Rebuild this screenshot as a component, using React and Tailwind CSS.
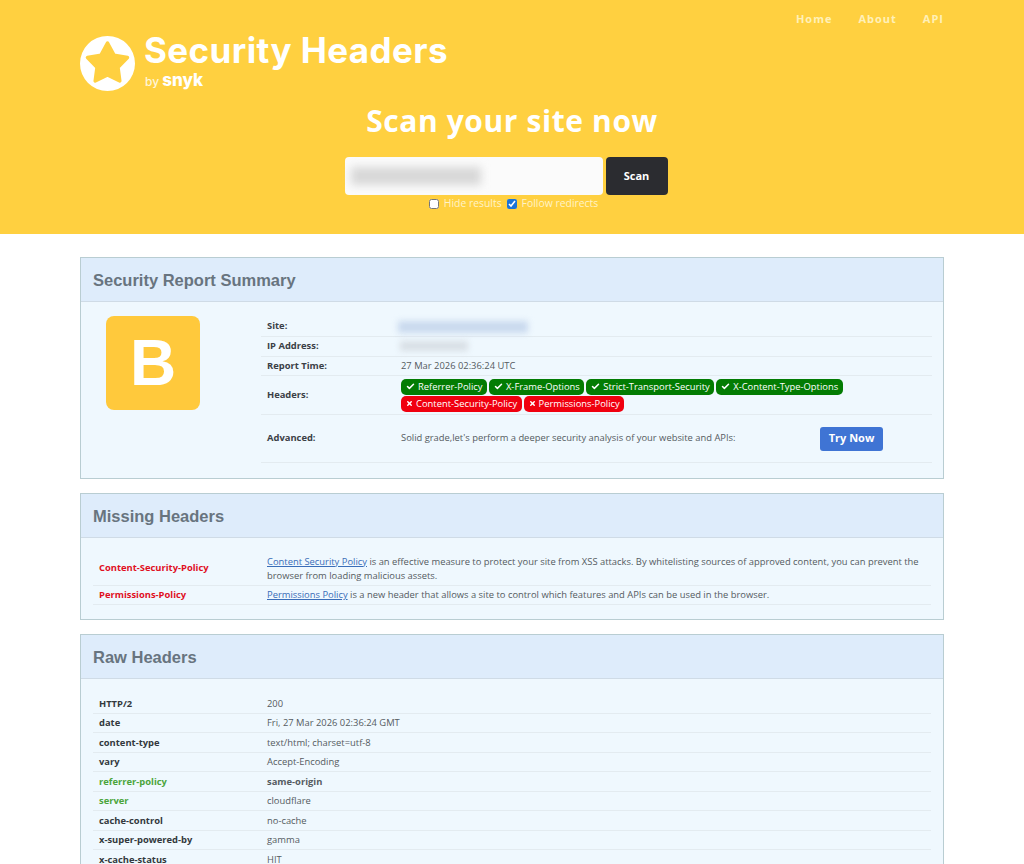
import { Check, X } from "lucide-react";

const GOOD = ["Referrer-Policy", "X-Frame-Options", "Strict-Transport-Security", "X-Content-Type-Options"];
const BAD = ["Content-Security-Policy", "Permissions-Policy"];

const RAW = [
  { name: "HTTP/2", value: "200" },
  { name: "date", value: "Fri, 27 Mar 2026 02:36:24 GMT" },
  { name: "content-type", value: "text/html; charset=utf-8" },
  { name: "vary", value: "Accept-Encoding" },
  { name: "referrer-policy", value: "same-origin", good: true, strong: true },
  { name: "server", value: "cloudflare", good: true },
  { name: "cache-control", value: "no-cache" },
  { name: "x-super-powered-by", value: "gamma" },
  { name: "x-cache-status", value: "HIT" },
];

function Pill({ good, children }) {
  return (
    <span className={`inline-flex items-center gap-[3px] h-[16px] pl-[5px] pr-[4.5px] rounded-[5px] text-[9.4px] leading-none whitespace-nowrap text-white ${good ? "bg-[#037c03]" : "bg-[#f0000f]"}`}>
      {good ? <Check size={9} strokeWidth={4} /> : <X size={7} strokeWidth={5} />}
      {children}
    </span>
  );
}

function Card({ title, children }) {
  return (
    <section className="border border-[#b9cdd2] bg-[#eff8fe]">
      <h2 className="h-[44px] px-[12px] pt-[1px] flex items-center bg-[#deecfb] border-b border-[#cfdbe6] font-['Liberation_Sans',sans-serif] font-bold text-[16.5px] text-[#68747f]">
        {title}
      </h2>
      {children}
    </section>
  );
}

function SummaryRow({ label, className, children }) {
  return (
    <div className={`flex items-center border-b border-[#e3ebf0] ${className}`}>
      <div className="w-[140px] pl-[6px] shrink-0 font-bold text-[#3b4046]">{label}</div>
      <div className="flex-1 min-w-0">{children}</div>
    </div>
  );
}

function Row({ label, labelClass = "text-[#33383d]", className = "h-[19.5px]", children }) {
  return (
    <div className={`flex items-center border-b border-[#e3ebf0] ${className}`}>
      <div className={`w-[174px] pl-[6px] pt-[1px] shrink-0 font-bold ${labelClass}`}>{label}</div>
      <div className="flex-1 min-w-0 pt-[1px]">{children}</div>
    </div>
  );
}

export default function App() {
  return (
    <div className="h-[864px] overflow-hidden bg-white font-['Open_Sans',sans-serif] text-[9.4px] text-[#555b61]">
      {/* Header */}
      <header className="h-[234px] bg-[#ffd040] text-white">
        <div className="relative w-[864px] mx-auto h-full flex flex-col">
          <nav className="absolute right-0 top-[11px] flex gap-[26px] text-[11px] font-bold tracking-[1px] text-[#fff0b8]">
            <span>Home</span>
            <span>About</span>
            <span>API</span>
          </nav>
          <div className="flex items-start gap-[9px] mt-[36px] h-[55px]">
            <svg width="55" height="55" viewBox="0 0 55 55">
              <circle cx="27.5" cy="27.5" r="27.5" fill="#fff" />
              <path
                d="M27.5 7 L34 19.1 L47.5 21.5 L38 31.4 L39.8 45 L27.5 39 L15.2 45 L17 31.4 L7.5 21.5 L21 19.1 Z"
                fill="#ffd040"
                stroke="#ffd040"
                strokeWidth="3.5"
                strokeLinejoin="round"
              />
            </svg>
            <div className="flex flex-col mt-[-5px]">
              <div className="font-['Inter',sans-serif] font-bold text-[35px] leading-[38px] tracking-[0.4px] whitespace-nowrap">Security Headers</div>
              <div className="font-['Inter',sans-serif] font-medium text-[12px] leading-[14px] mt-[4px] pl-[1px] text-[#fff6d9]">
                by <span className="font-extrabold text-[17px] text-white">snyk</span>
              </div>
            </div>
          </div>
          <h1 className="mt-[12px] text-center font-bold text-[30px] leading-[36px] tracking-[0.6px]">Scan your site now</h1>
          <div className="flex justify-center gap-[3px] mt-[18px] pr-[12px]">
            <div className="w-[258px] h-[38px] rounded-[4px] bg-[#fbfbfb] flex items-center px-[6px]">
              <div className="w-[130px] h-[18px] bg-[#d8d8d8] blur-[4px]" />
            </div>
            <button className="w-[62px] h-[38px] rounded-[4px] bg-[#2b2c30] text-white text-[11px] font-bold">Scan</button>
          </div>
          <div className="flex justify-center items-center mt-[1px] pl-[3px] text-[10.4px] text-[#fff3c7] gap-[5px]">
            <input type="checkbox" readOnly className="w-[10px] h-[10px]" />
            <span>Hide results</span>
            <input type="checkbox" readOnly checked className="w-[10px] h-[10px] accent-[#1a73d8]" />
            <span>Follow redirects</span>
          </div>
        </div>
      </header>

      <main className="w-[864px] mx-auto mt-[23px] flex flex-col gap-[14px]">
        {/* Summary */}
        <Card title="Security Report Summary">
          <div className="flex h-[176px]">
            <div className="w-[180px] shrink-0 pt-[14px] pl-[25px]">
              <div className="w-[94px] h-[94px] rounded-[8px] bg-[#ffc93c] flex items-center justify-center font-['Liberation_Sans',sans-serif] font-bold text-[64px] text-white">
                B
              </div>
            </div>
            <div className="flex-1 pr-[11px] pt-[15px]">
              <SummaryRow label="Site:" className="h-[20px]">
                <div className="w-[130px] h-[12px] ml-[-3px] bg-[#c9d9ee] blur-[3px]" />
              </SummaryRow>
              <SummaryRow label="IP Address:" className="h-[19.5px]">
                <div className="w-[68px] h-[10px] ml-[-1px] bg-[#d8dfe5] blur-[3px]" />
              </SummaryRow>
              <SummaryRow label="Report Time:" className="h-[19.5px]">27 Mar 2026 02:36:24 UTC</SummaryRow>
              <SummaryRow label="Headers:" className="h-[39px]">
                <div className="flex flex-wrap gap-x-[2px] gap-y-[1px]">
                  {GOOD.map((h) => <Pill key={h} good>{h}</Pill>)}
                  {BAD.map((h) => <Pill key={h}>{h}</Pill>)}
                </div>
              </SummaryRow>
              <SummaryRow label="Advanced:" className="h-[48px]">
                <div className="flex items-center">
                  <span className="w-[419px]">Solid grade,let's perform a deeper security analysis of your website and APIs:</span>
                  <button className="w-[63px] h-[24px] rounded-[3px] bg-[#3f74d4] text-white text-[11px] font-bold">Try Now</button>
                </div>
              </SummaryRow>
            </div>
          </div>
        </Card>

        {/* Missing */}
        <Card title="Missing Headers">
          <div className="px-[12px] pt-[13px] pb-[14px]">
            <Row label="Content-Security-Policy" labelClass="text-[#e0101e]" className="h-[35px]">
              <p className="leading-[14px]">
                <a className="text-[#3a6db8] underline">Content Security Policy</a> is an effective measure to protect your site from XSS attacks. By whitelisting sources of approved content, you can prevent the browser from loading malicious assets.
              </p>
            </Row>
            <Row label="Permissions-Policy" labelClass="text-[#e0101e]" className="h-[19px]">
              <a className="text-[#3a6db8] underline">Permissions Policy</a> is a new header that allows a site to control which features and APIs can be used in the browser.
            </Row>
          </div>
        </Card>

        {/* Raw */}
        <Card title="Raw Headers">
          <div className="px-[12px] pt-[15px]">
            {RAW.map((r) => (
              <Row key={r.name} label={r.name} labelClass={r.good ? "text-[#4ba53c]" : "text-[#33383d]"}>
                <span className={r.strong ? "font-bold" : ""}>{r.value}</span>
              </Row>
            ))}
          </div>
        </Card>
      </main>
    </div>
  );
}
